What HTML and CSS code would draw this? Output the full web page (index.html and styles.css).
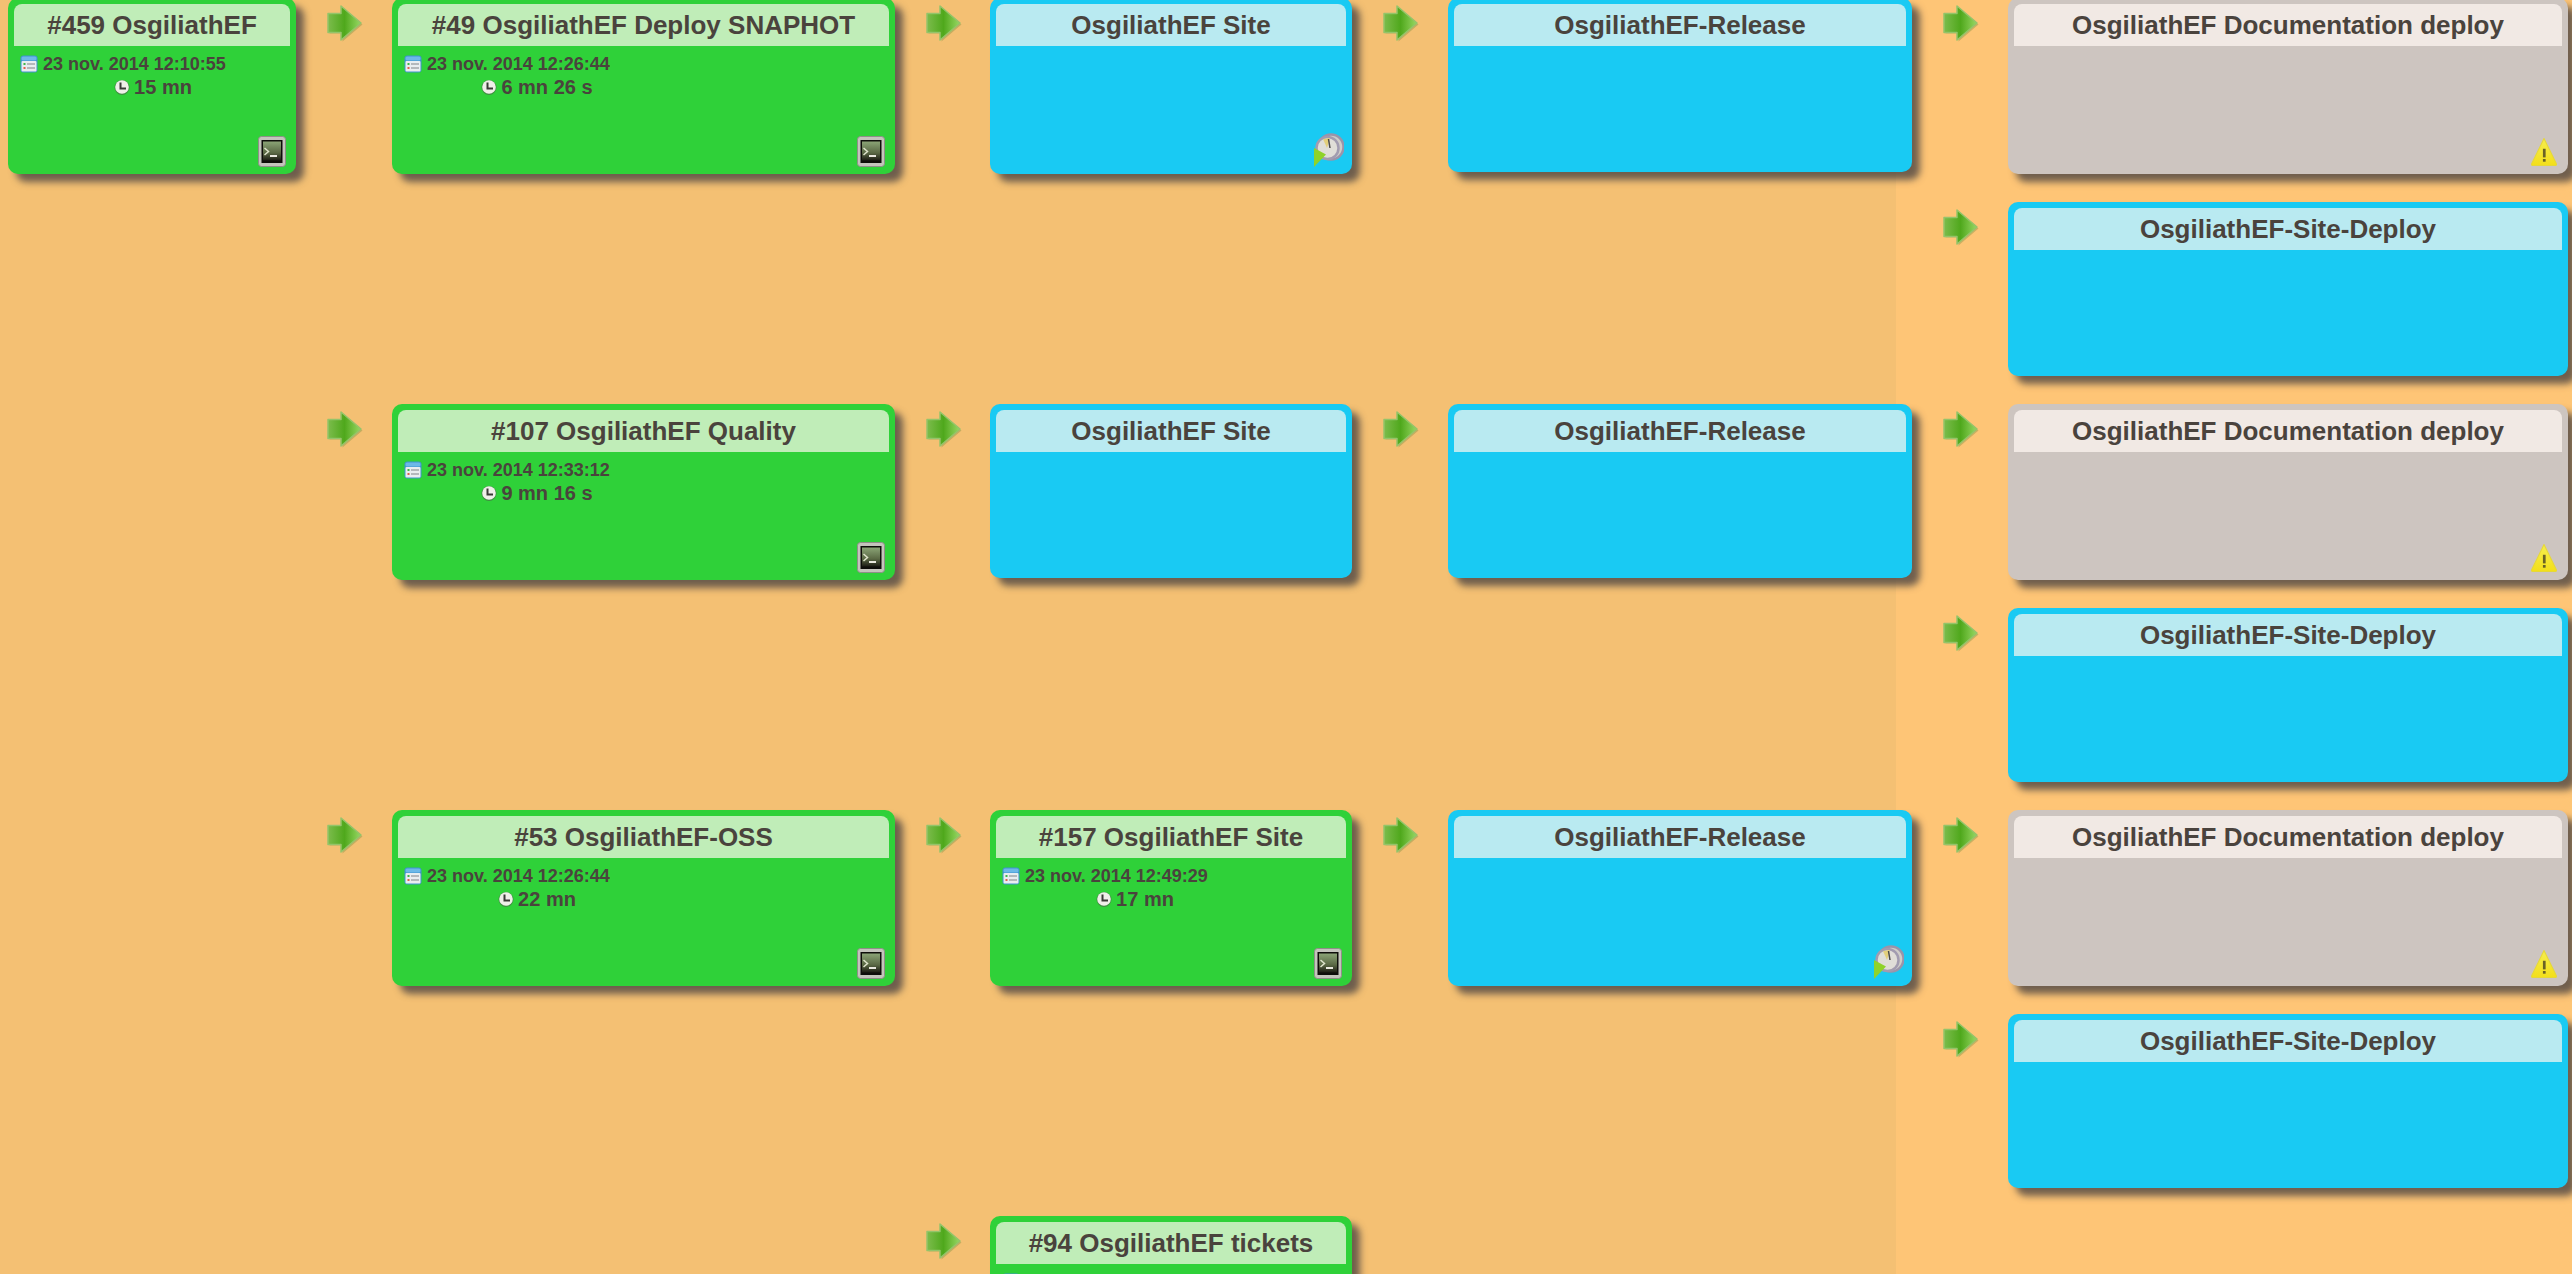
FILE: index.html
```html
<!DOCTYPE html>
<html lang="en">
<head>
    <meta charset="UTF-8">
    <meta name="viewport" content="width=device-width, initial-scale=1.0">
    <title>OsgiliathEF Build Pipeline</title>
    <link rel="stylesheet" href="styles.css">
</head>
<body>
    <svg class="defs" width="0" height="0" aria-hidden="true">
        <defs>
            <linearGradient id="arrowFill" x1="0" y1="0" x2="1" y2="0">
                <stop offset="0" stop-color="#7cbc4c"/>
                <stop offset="0.5" stop-color="#4fa81c"/>
                <stop offset="1" stop-color="#98d864"/>
            </linearGradient>
            <linearGradient id="termFill" x1="0" y1="0" x2="0" y2="1">
                <stop offset="0" stop-color="#8ba476"/>
                <stop offset="0.6" stop-color="#5a6844"/>
                <stop offset="1" stop-color="#1c1c14"/>
            </linearGradient>
            <linearGradient id="warnFill" x1="0" y1="0" x2="0" y2="1">
                <stop offset="0" stop-color="#f6ee4e"/>
                <stop offset="1" stop-color="#f3df1a"/>
            </linearGradient>
            <symbol id="arrow" viewBox="0 0 36 37">
                <path d="M1 9h13V1l20 17-20 17v-8H1z" fill="#6d8a3c" opacity=".35" transform="translate(1.500 1.500)"/>
                <path d="M1 8.500h13V1l20 17-20 17v-7.500H1z" fill="url(#arrowFill)" stroke="#94c46a" stroke-width="1.500" stroke-linejoin="round"/>
            </symbol>
            <symbol id="calendar" viewBox="0 0 18 18">
                <rect x="0.500" y="0.500" width="17" height="17" rx="3" fill="#3f93cf"/>
                <rect x="1.500" y="6" width="15" height="10.500" rx="1" fill="#e9edf0"/>
                <rect x="1.500" y="1.500" width="15" height="4" rx="1.500" fill="#6cb8e8"/>
                <rect x="3.500" y="8" width="2" height="2" fill="#3fb54a"/>
                <rect x="3.500" y="12" width="2" height="2" fill="#e0604f"/>
                <rect x="7" y="8" width="8" height="2" fill="#b4b8bc"/>
                <rect x="7" y="12" width="8" height="2" fill="#b4b8bc"/>
            </symbol>
            <symbol id="clock" viewBox="0 0 16 16">
                <circle cx="8" cy="8.500" r="7.500" fill="#4d5a48" opacity=".55"/>
                <circle cx="8" cy="8" r="6.800" fill="#efefe9"/>
                <path d="M6.500 3.500V9.500H12" fill="none" stroke="#3a3a36" stroke-width="2"/>
            </symbol>
            <symbol id="terminal" viewBox="0 0 28 31">
                <rect x="0.500" y="0.500" width="27" height="30" rx="3" fill="#c4c4bc" stroke="#8f8f88"/>
                <rect x="3.500" y="4" width="21" height="23" fill="#0e0e0a"/>
                <rect x="5" y="5.500" width="18" height="19" fill="url(#termFill)"/>
                <path d="M6.500 12l4 3.500-4 3.500" fill="none" stroke="#dfe4cc" stroke-width="1.500"/>
                <rect x="12" y="19" width="7" height="2" fill="#e8e8de"/>
            </symbol>
            <symbol id="watch" viewBox="0 0 30 34">
                <circle cx="17" cy="14" r="12.500" fill="#cfccc8" stroke="#9a94aa" stroke-width="2.500"/>
                <circle cx="13.500" cy="15" r="11" fill="#e0ded8" stroke="#a29cb0" stroke-width="2.500"/>
                <path d="M13 15L9 6l7-1z" fill="#e3cf7c"/>
                <path d="M14.500 6l1.500 9" stroke="#4c4a48" stroke-width="1.500"/>
                <path d="M0 15l12 6.500L0 34z" fill="#8fd32a"/>
            </symbol>
            <symbol id="warning" viewBox="0 0 24 26">
                <path d="M12 .5L23.500 24a1 1 0 0 1-1 1.500H1.500a1 1 0 0 1-1-1.500z" fill="url(#warnFill)" stroke="#e6d838"/>
                <rect x="11" y="10" width="2.500" height="8" fill="#6a6226"/>
                <rect x="11" y="19.500" width="2.500" height="2.500" fill="#6a6226"/>
            </symbol>
        </defs>
    </svg>

    <div class="pipeline">
        <div class="row">
            <div class="card green tall c1">
                <div class="title">#459 OsgiliathEF</div>
                <div class="info">
                    <div class="date"><svg class="ico-cal"><use href="#calendar"/></svg>23 nov. 2014 12:10:55</div>
                    <div class="duration"><svg class="ico-clock"><use href="#clock"/></svg>15 mn</div>
                </div>
                <svg class="badge term"><use href="#terminal"/></svg>
            </div>
            <div class="link a2"><svg class="arrow"><use href="#arrow"/></svg></div>
            <div class="card green tall c2">
                <div class="title">#49 OsgiliathEF Deploy SNAPHOT</div>
                <div class="info">
                    <div class="date"><svg class="ico-cal"><use href="#calendar"/></svg>23 nov. 2014 12:26:44</div>
                    <div class="duration"><svg class="ico-clock"><use href="#clock"/></svg>6 mn 26 s</div>
                </div>
                <svg class="badge term"><use href="#terminal"/></svg>
            </div>
            <div class="link a3"><svg class="arrow"><use href="#arrow"/></svg></div>
            <div class="card blue tall c3">
                <div class="title">OsgiliathEF Site</div>
                <svg class="badge watch"><use href="#watch"/></svg>
            </div>
            <div class="link a4"><svg class="arrow"><use href="#arrow"/></svg></div>
            <div class="card blue c4">
                <div class="title">OsgiliathEF-Release</div>
            </div>
            <div class="link a5"><svg class="arrow"><use href="#arrow"/></svg></div>
            <div class="card gray tall c5">
                <div class="title">OsgiliathEF Documentation deploy</div>
                <svg class="badge warn"><use href="#warning"/></svg>
            </div>
        </div>

        <div class="row">
            <div class="link a5"><svg class="arrow"><use href="#arrow"/></svg></div>
            <div class="card blue c5">
                <div class="title">OsgiliathEF-Site-Deploy</div>
            </div>
        </div>

        <div class="row">
            <div class="link a2"><svg class="arrow"><use href="#arrow"/></svg></div>
            <div class="card green tall c2">
                <div class="title">#107 OsgiliathEF Quality</div>
                <div class="info">
                    <div class="date"><svg class="ico-cal"><use href="#calendar"/></svg>23 nov. 2014 12:33:12</div>
                    <div class="duration"><svg class="ico-clock"><use href="#clock"/></svg>9 mn 16 s</div>
                </div>
                <svg class="badge term"><use href="#terminal"/></svg>
            </div>
            <div class="link a3"><svg class="arrow"><use href="#arrow"/></svg></div>
            <div class="card blue c3">
                <div class="title">OsgiliathEF Site</div>
            </div>
            <div class="link a4"><svg class="arrow"><use href="#arrow"/></svg></div>
            <div class="card blue c4">
                <div class="title">OsgiliathEF-Release</div>
            </div>
            <div class="link a5"><svg class="arrow"><use href="#arrow"/></svg></div>
            <div class="card gray tall c5">
                <div class="title">OsgiliathEF Documentation deploy</div>
                <svg class="badge warn"><use href="#warning"/></svg>
            </div>
        </div>

        <div class="row">
            <div class="link a5"><svg class="arrow"><use href="#arrow"/></svg></div>
            <div class="card blue c5">
                <div class="title">OsgiliathEF-Site-Deploy</div>
            </div>
        </div>

        <div class="row">
            <div class="link a2"><svg class="arrow"><use href="#arrow"/></svg></div>
            <div class="card green tall c2">
                <div class="title">#53 OsgiliathEF-OSS</div>
                <div class="info">
                    <div class="date"><svg class="ico-cal"><use href="#calendar"/></svg>23 nov. 2014 12:26:44</div>
                    <div class="duration"><svg class="ico-clock"><use href="#clock"/></svg>22 mn</div>
                </div>
                <svg class="badge term"><use href="#terminal"/></svg>
            </div>
            <div class="link a3"><svg class="arrow"><use href="#arrow"/></svg></div>
            <div class="card green tall c3">
                <div class="title">#157 OsgiliathEF Site</div>
                <div class="info">
                    <div class="date"><svg class="ico-cal"><use href="#calendar"/></svg>23 nov. 2014 12:49:29</div>
                    <div class="duration"><svg class="ico-clock"><use href="#clock"/></svg>17 mn</div>
                </div>
                <svg class="badge term"><use href="#terminal"/></svg>
            </div>
            <div class="link a4"><svg class="arrow"><use href="#arrow"/></svg></div>
            <div class="card blue tall c4">
                <div class="title">OsgiliathEF-Release</div>
                <svg class="badge watch"><use href="#watch"/></svg>
            </div>
            <div class="link a5"><svg class="arrow"><use href="#arrow"/></svg></div>
            <div class="card gray tall c5">
                <div class="title">OsgiliathEF Documentation deploy</div>
                <svg class="badge warn"><use href="#warning"/></svg>
            </div>
        </div>

        <div class="row">
            <div class="link a5"><svg class="arrow"><use href="#arrow"/></svg></div>
            <div class="card blue c5">
                <div class="title">OsgiliathEF-Site-Deploy</div>
            </div>
        </div>

        <div class="row">
            <div class="link a3"><svg class="arrow"><use href="#arrow"/></svg></div>
            <div class="card green tall c3">
                <div class="title">#94 OsgiliathEF tickets</div>
                <div class="info">
                    <div class="date"><svg class="ico-cal"><use href="#calendar"/></svg></div>
                </div>
            </div>
        </div>
    </div>
</body>
</html>
```

FILE: styles.css
```css
html, body {
    margin: 0;
    height: 1274px;
    overflow: hidden;
}
body {
    font-family: "Liberation Sans", Arial, sans-serif;
    font-weight: bold;
    color: #4a433d;
    background: linear-gradient(to right, #f4c073 1896px, #fec576 1896px);
}
.defs {
    position: absolute;
}
.pipeline {
    padding: 0 4px 0 8px;
    margin-top: -2px;
}
.row {
    display: grid;
    grid-template-columns: 288px 96px 503px 95px 362px 96px 464px 96px 560px;
    align-items: start;
    margin-bottom: 28px;
}
.c1 { grid-column: 1; }
.a2 { grid-column: 2; }
.c2 { grid-column: 3; }
.a3 { grid-column: 4; }
.c3 { grid-column: 5; }
.a4 { grid-column: 6; }
.c4 { grid-column: 7; }
.a5 { grid-column: 8; }
.c5 { grid-column: 9; }
.link {
    display: flex;
    justify-content: center;
    padding: 7px 0 0 2px;
}
.arrow {
    width: 36px;
    height: 37px;
}
.card {
    position: relative;
    box-sizing: border-box;
    min-height: 174px;
    padding: 6px;
    border-radius: 10px;
    box-shadow: 8px 8px 7px rgba(80, 72, 68, 0.82);
}
.tall {
    min-height: 176px;
}
.green { background-color: #2fd139; }
.blue { background-color: #19caf3; }
.gray { background-color: #cdc5c0; }
.title {
    height: 42px;
    line-height: 42px;
    font-size: 26px;
    text-align: center;
    border-radius: 8px 8px 0 0;
}
.green .title { background-color: #c0edb8; }
.blue .title { background-color: #b9eaf1; }
.gray .title { background-color: #f1e9e4; }
.info {
    width: 278px;
    padding-top: 9px;
}
.date {
    display: flex;
    align-items: center;
    height: 18px;
    padding-left: 6px;
    font-size: 18px;
}
.duration {
    display: flex;
    align-items: center;
    justify-content: center;
    height: 20px;
    margin-top: 4px;
    font-size: 20px;
}
.ico-cal {
    width: 18px;
    height: 18px;
    margin-right: 5px;
}
.ico-clock {
    width: 16px;
    height: 16px;
    margin-right: 4px;
}
.badge {
    position: absolute;
}
.term {
    right: 10px;
    bottom: 7px;
    width: 28px;
    height: 31px;
}
.watch {
    right: 8px;
    bottom: 7px;
    width: 30px;
    height: 34px;
}
.warn {
    right: 11px;
    bottom: 8px;
    width: 26px;
    height: 28px;
}
```
